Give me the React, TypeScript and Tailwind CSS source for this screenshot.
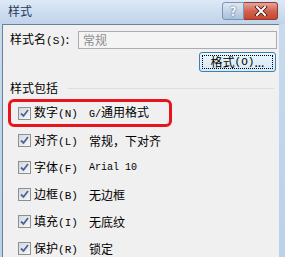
import * as React from 'react'

const ROWS = [
  { label: '数字', key: 'N', value: 'G/通用格式' },
  { label: '对齐', key: 'L', value: '常规，下对齐' },
  { label: '字体', key: 'F', value: 'Arial 10' },
  { label: '边框', key: 'B', value: '无边框' },
  { label: '填充', key: 'I', value: '无底纹' },
  { label: '保护', key: 'R', value: '锁定' },
]

const cjk = "font-['SimSun','Noto_Sans_CJK_SC',sans-serif]"
const mono = "font-['Liberation_Mono','Noto_Sans_CJK_SC',monospace]"

function Checkbox() {
  return (
    <span className="flex h-[13px] w-[13px] flex-shrink-0 items-center justify-center border border-[#8e8f8f] bg-gradient-to-br from-[#d4d8de] to-[#f7f8fa]">
      <svg aria-hidden="true" viewBox="0 0 11 11" className="h-[11px] w-[11px]">
        <path d="M2 5.5l2.5 2.5 4.5-6" fill="none" stroke="#4c6592" strokeWidth={1.8} />
      </svg>
    </span>
  )
}

function Mnemonic({ k }: { k: string }) {
  return <span className={`${mono} text-[11px]`}>({k})</span>
}

export default function App() {
  return (
    <div className={`${cjk} flex h-[257px] w-[285px] flex-col overflow-hidden bg-gradient-to-b from-[#c9dbef] to-[#b9d1ea] text-[12px] text-black`}>
      {/* title bar */}
      <div className="flex h-[24px] flex-shrink-0 items-start justify-between bg-gradient-to-b from-[#dde9f6] to-[#bfd3ea] pl-[8px] pr-[7px]">
        <span className="mt-[5px] text-[12px] leading-none text-[#1e395b]">样式</span>
        <div className="mt-[2px] flex">
          <div className="flex h-[18px] w-[22px] items-center justify-center rounded-l-[3px] border border-[#7d93b2] bg-gradient-to-b from-[#dfe9f5] to-[#a9bfd9] text-[12px] font-bold leading-none text-white [text-shadow:0_0_2px_#31435c]">
            ?
          </div>
          <div className="flex h-[18px] w-[34px] items-center justify-center rounded-r-[3px] border border-l-0 border-[#8a3d38] bg-gradient-to-b from-[#e8a496] via-[#d1624f] to-[#c7452f]">
            <svg aria-hidden="true" viewBox="0 0 14 10" className="h-[10px] w-[14px]">
              <path d="M3 1l8 8M11 1l-8 8" stroke="#3a1510" strokeWidth={3.6} strokeLinecap="square" />
              <path d="M3 1l8 8M11 1l-8 8" stroke="#ffffff" strokeWidth={2} strokeLinecap="square" />
            </svg>
          </div>
        </div>
      </div>

      {/* client area */}
      <div className="ml-[2px] mr-[6px] flex flex-1 flex-col border-l border-t border-[#6f8093] bg-[#f0f0f0] pl-[7px] pr-[2px]">
        <div className="mt-[6px] flex items-center">
          <span className="w-[68px] leading-none">
            样式名<Mnemonic k="S" />:
          </span>
          <div className="flex h-[18px] flex-1 items-center border border-[#abadb3] bg-[#f4f4f4] pl-[4px] leading-none text-[#8d8d8d]">
            常规
          </div>
        </div>

        <div className="mt-[3px] flex justify-end pr-[1px]">
          <div className="flex h-[20px] w-[77px] items-center justify-center rounded-[3px] border border-[#3c7fb1] bg-gradient-to-b from-[#eaf6fd] to-[#d5e8f3] p-[2px]">
            <div className="flex h-full w-full items-center justify-center border border-dotted border-black leading-none">
              格式<Mnemonic k="O" />...
            </div>
          </div>
        </div>

        <div className="mt-[10px] flex items-center">
          <span className="leading-none">样式包括</span>
          <div className="ml-[10px] mr-[3px] h-px flex-1 bg-[#d5dfe5]" />
        </div>

        <div className="mt-[5px] flex flex-col">
          {ROWS.map((row, i) => (
            <div
              key={row.key}
              className={
                i === 0
                  ? '-ml-[2px] flex h-[28px] w-[164px] items-center rounded-[6px] border-[3px] border-[#e8141d] pl-[7px]'
                  : 'flex h-[27px] items-center pl-[8px]'
              }
            >
              <Checkbox />
              <span className="ml-[3px] w-[55px] leading-none">
                {row.label}
                <Mnemonic k={row.key} />
              </span>
              <span className={row.key === 'F' ? `${mono} text-[10px] leading-none` : 'leading-none'}>
                {row.key === 'N' ? (
                  <>
                    <span className={`${mono} text-[10px]`}>G/</span>通用格式
                  </>
                ) : (
                  row.value
                )}
              </span>
            </div>
          ))}
        </div>
      </div>
    </div>
  )
}
